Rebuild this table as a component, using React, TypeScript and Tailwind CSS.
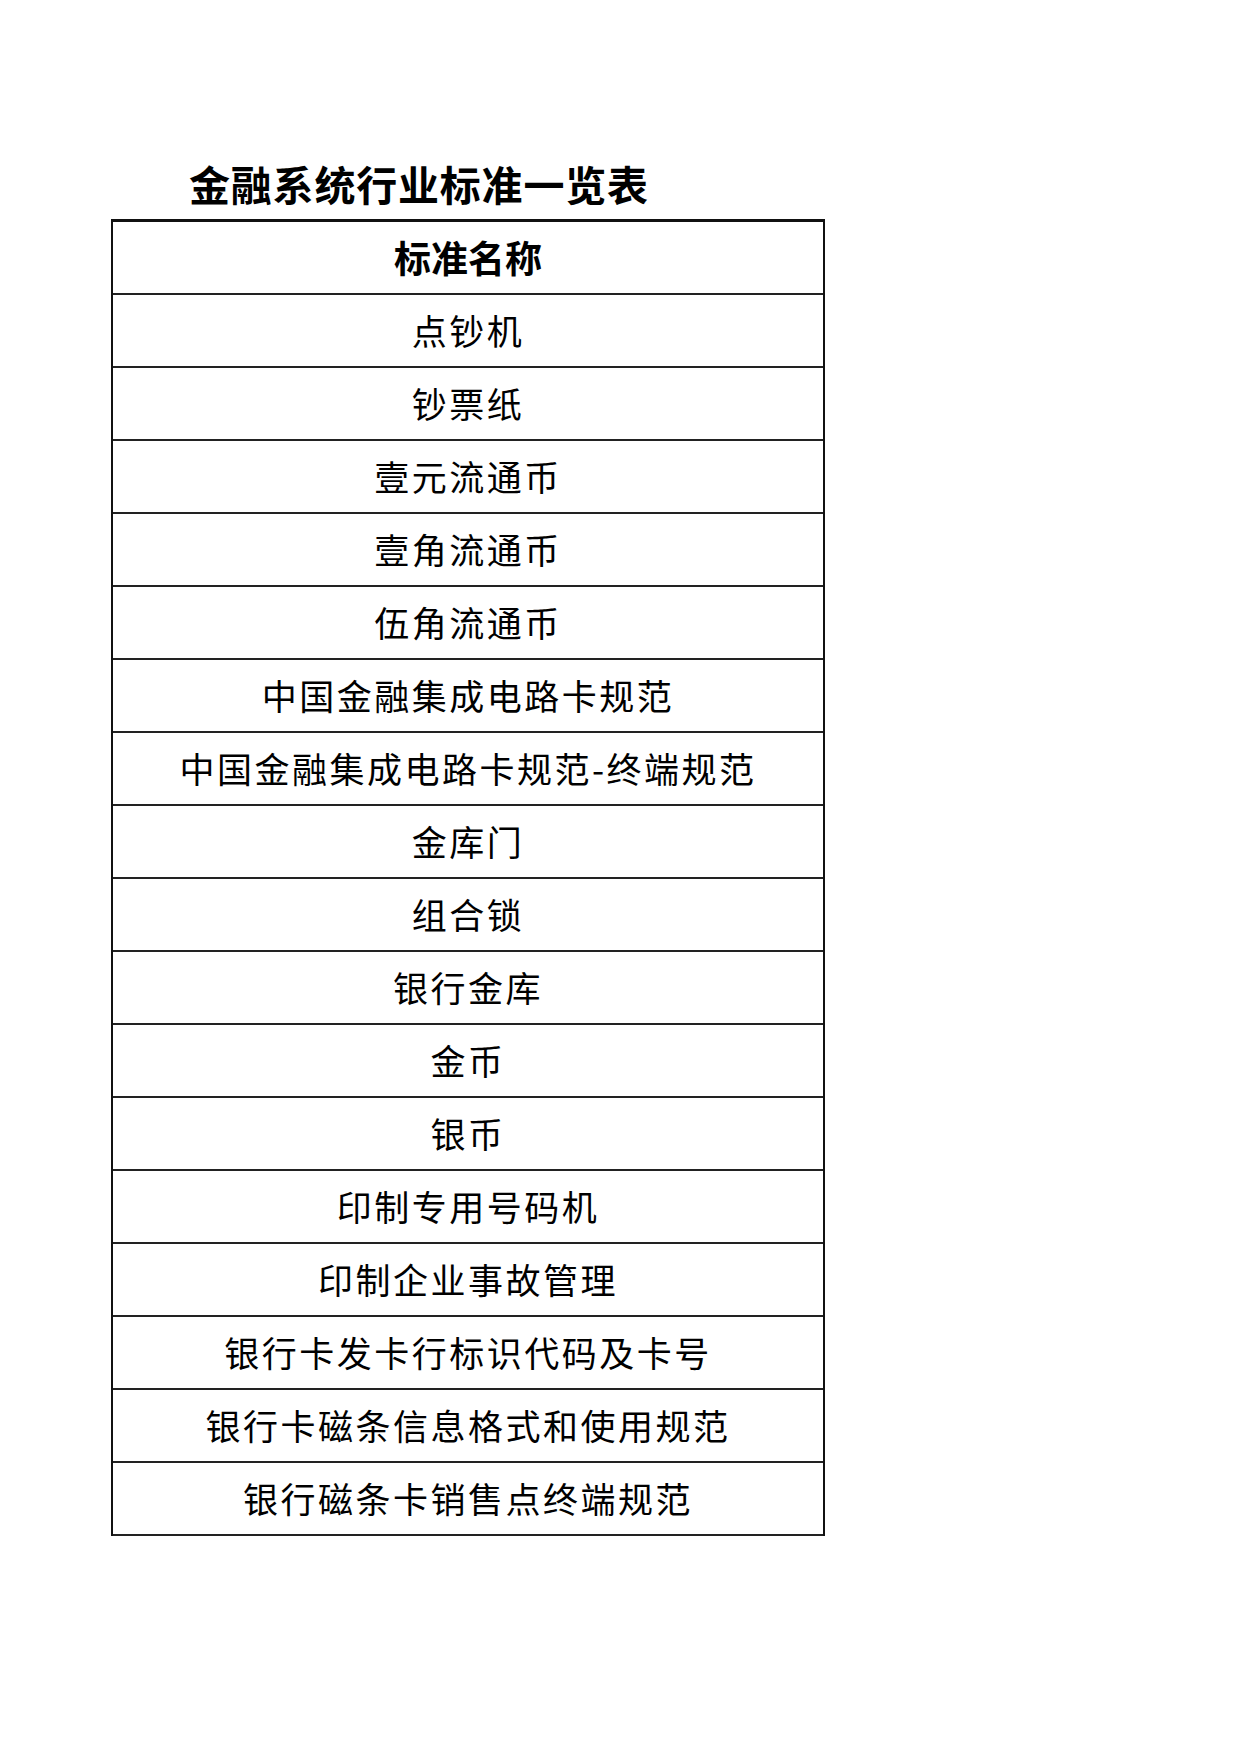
const rows = [
  "点钞机",
  "钞票纸",
  "壹元流通币",
  "壹角流通币",
  "伍角流通币",
  "中国金融集成电路卡规范",
  "中国金融集成电路卡规范-终端规范",
  "金库门",
  "组合锁",
  "银行金库",
  "金币",
  "银币",
  "印制专用号码机",
  "印制企业事故管理",
  "银行卡发卡行标识代码及卡号",
  "银行卡磁条信息格式和使用规范",
  "银行磁条卡销售点终端规范",
];

export default function App() {
  return (
    <div className="min-h-[1754px] w-[1240px] bg-white font-['Noto_Sans_CJK_SC',sans-serif] text-black">
      <div className="pl-[111px] pt-[163px]">
        <h1 className="pl-[78px] text-[41px] font-bold leading-none tracking-[0.8px]">
          金融系统行业标准一览表
        </h1>

        <div className="mt-[15px] w-[714px] border-x-2 border-t-[3px] border-[#111]">
          <div className="flex h-[73px] items-center justify-center border-b-2 border-[#222] text-[37px] font-bold">
            标准名称
          </div>
          {rows.map((name, i) => (
            <div
              key={i}
              className="flex h-[73px] items-center justify-center border-b-2 border-[#222] text-[35px] tracking-[2.5px]"
            >
              {name}
            </div>
          ))}
        </div>
      </div>
    </div>
  );
}
